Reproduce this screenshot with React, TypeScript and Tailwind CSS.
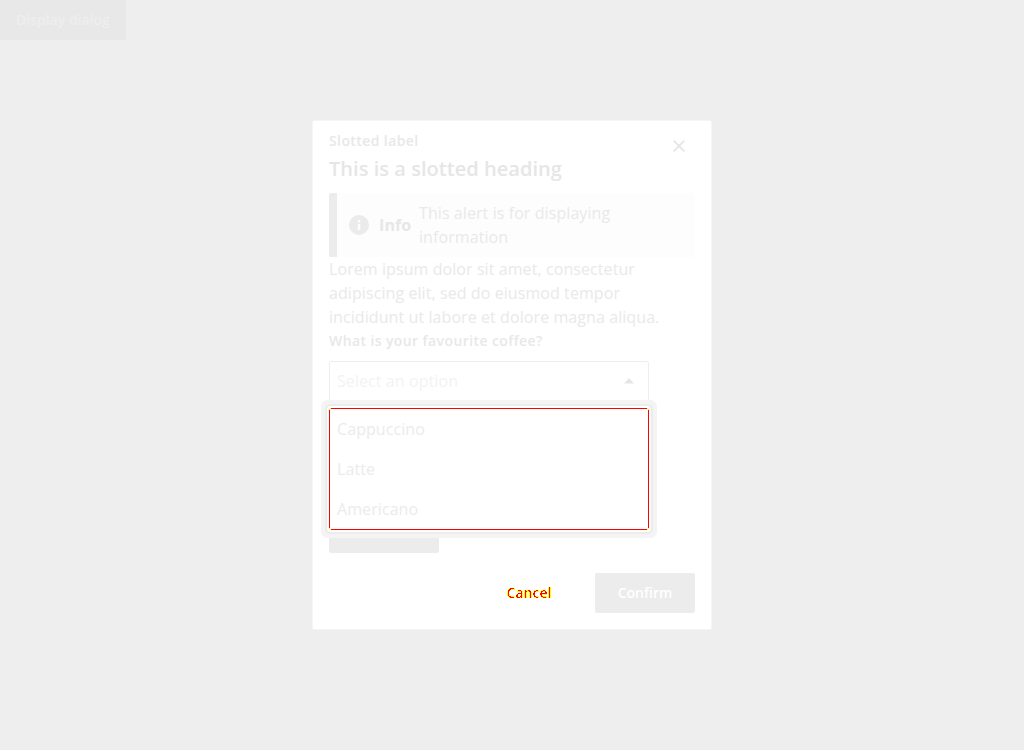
import React from "react";

const options = ["Cappuccino", "Latte", "Americano"];

const corners = [
  "-left-px -top-px",
  "-right-px -top-px rotate-90",
  "-bottom-px -left-px rotate-90",
  "-bottom-px -right-px",
];

function ThresholdFilter() {
  return (
    <svg width="0" height="0" className="absolute" aria-hidden="true">
      <filter id="edge" colorInterpolationFilters="sRGB" x="-5%" y="-5%" width="110%" height="110%">
        <feColorMatrix values="0 0 0 0 1  0 0 0 1 0  0 0 0 0 0  0 0 0 1 0" />
        <feComponentTransfer>
          <feFuncG type="discrete" tableValues="1 1 1 1 1 1 1 0 0 0" />
          <feFuncA type="discrete" tableValues="0 0 1 1 1 1 1 1 1 1" />
        </feComponentTransfer>
      </filter>
    </svg>
  );
}

function CoffeeSelect() {
  return (
    <div className="relative h-10 w-80">
      <div className="flex h-10 items-center justify-between rounded-[2px] border border-[#eeeeee] pl-[7px] pr-[14px] text-[#f3f3f3]">
        <span>Select an option</span>
        <svg width="10" height="6" viewBox="0 0 10 6">
          <path d="M0 5.5 5 0l5 5.5z" fill="#e6e6e6" />
        </svg>
      </div>
      <ul className="absolute left-0 top-[47px] z-10 h-[122px] w-80 rounded-[2px] border border-[#ff0000] bg-white shadow-[0_0_0_2px_#fff,0_0_0_4px_#ececec,0_0_0_8px_#f4f4f4]">
        {options.map((o) => (
          <li key={o} className="flex h-10 items-center pl-[7px] text-[#ebebeb]">
            {o}
          </li>
        ))}
        {corners.map((c) => (
          <li key={c} aria-hidden="true" className={`absolute grid h-[2px] w-[2px] grid-cols-2 bg-white ${c}`}>
            <span className="col-start-2 row-start-1 h-px bg-[#ffff00]" />
            <span className="col-start-1 row-start-2 h-px bg-[#ffff00]" />
          </li>
        ))}
      </ul>
    </div>
  );
}

export default function App() {
  return (
    <div className="relative h-[750px] w-full overflow-hidden bg-[#eeeeee] font-['Open_Sans',sans-serif] text-base leading-6 tracking-[0.08px] text-[#e9e9e9]">
      <ThresholdFilter />
      <button className="h-10 w-[126px] rounded-[2px] bg-[#e8e8e8] text-sm font-semibold tracking-normal text-[#eeeeee]">
        Display dialog
      </button>
      <div className="absolute inset-0 flex items-center justify-center">
        <section className="flex h-[510px] w-[400px] flex-col rounded-[2px] border border-[#f5f5f5] bg-white px-4 pt-2">
          <header className="flex h-16 justify-between">
            <div>
              <div className="text-sm font-semibold leading-6 tracking-[0.4px] text-[#e8e8e8]">Slotted label</div>
              <h1 className="text-xl font-semibold leading-8 tracking-[0.04px] text-[#e6e6e6]">This is a slotted heading</h1>
            </div>
            <svg className="mr-[10px] mt-[11px]" width="12" height="12" viewBox="0 0 12 12">
              <path d="m.7.7 10.6 10.6M11.3.7.7 11.3" stroke="#e6e6e6" strokeWidth="1.9" />
            </svg>
          </header>
          <div className="flex h-16 shrink-0 items-center bg-[#fdfdfd]">
            <div className="h-16 w-2 shrink-0 rounded-l-[2px] bg-[#ececec]" />
            <svg className="ml-3 shrink-0" width="20" height="20" viewBox="0 0 20 20">
              <circle cx="10" cy="10" r="10" fill="#ebebeb" />
              <path d="M8.8 5h2.4v2.2H8.8zM8.8 9h2.4v6H8.8z" fill="#fdfdfd" />
            </svg>
            <strong className="ml-[10px] w-10 font-bold text-[#e7e7e7]">Info</strong>
            <p className="w-60">This alert is for displaying information</p>
          </div>
          <p className="w-[340px]">
            Lorem ipsum dolor sit amet, consectetur adipiscing elit, sed do eiusmod tempor incididunt ut labore et dolore
            magna aliqua.
          </p>
          <label className="mb-2 text-sm font-semibold leading-6 tracking-[0.4px] text-[#e8e8e8]">What is your favourite coffee?</label>
          <CoffeeSelect />
          <div className="mt-[112px] h-10 w-[110px] shrink-0 rounded-[2px] bg-[#ececec]" />
          <footer className="mt-5 flex justify-end">
            <button className="h-10 w-[100px] text-sm font-semibold tracking-normal text-black [filter:url(#edge)]">Cancel</button>
            <button className="ml-4 h-10 w-[100px] rounded-[2px] bg-[#ececec] text-sm font-semibold tracking-normal text-white">
              Confirm
            </button>
          </footer>
        </section>
      </div>
    </div>
  );
}
